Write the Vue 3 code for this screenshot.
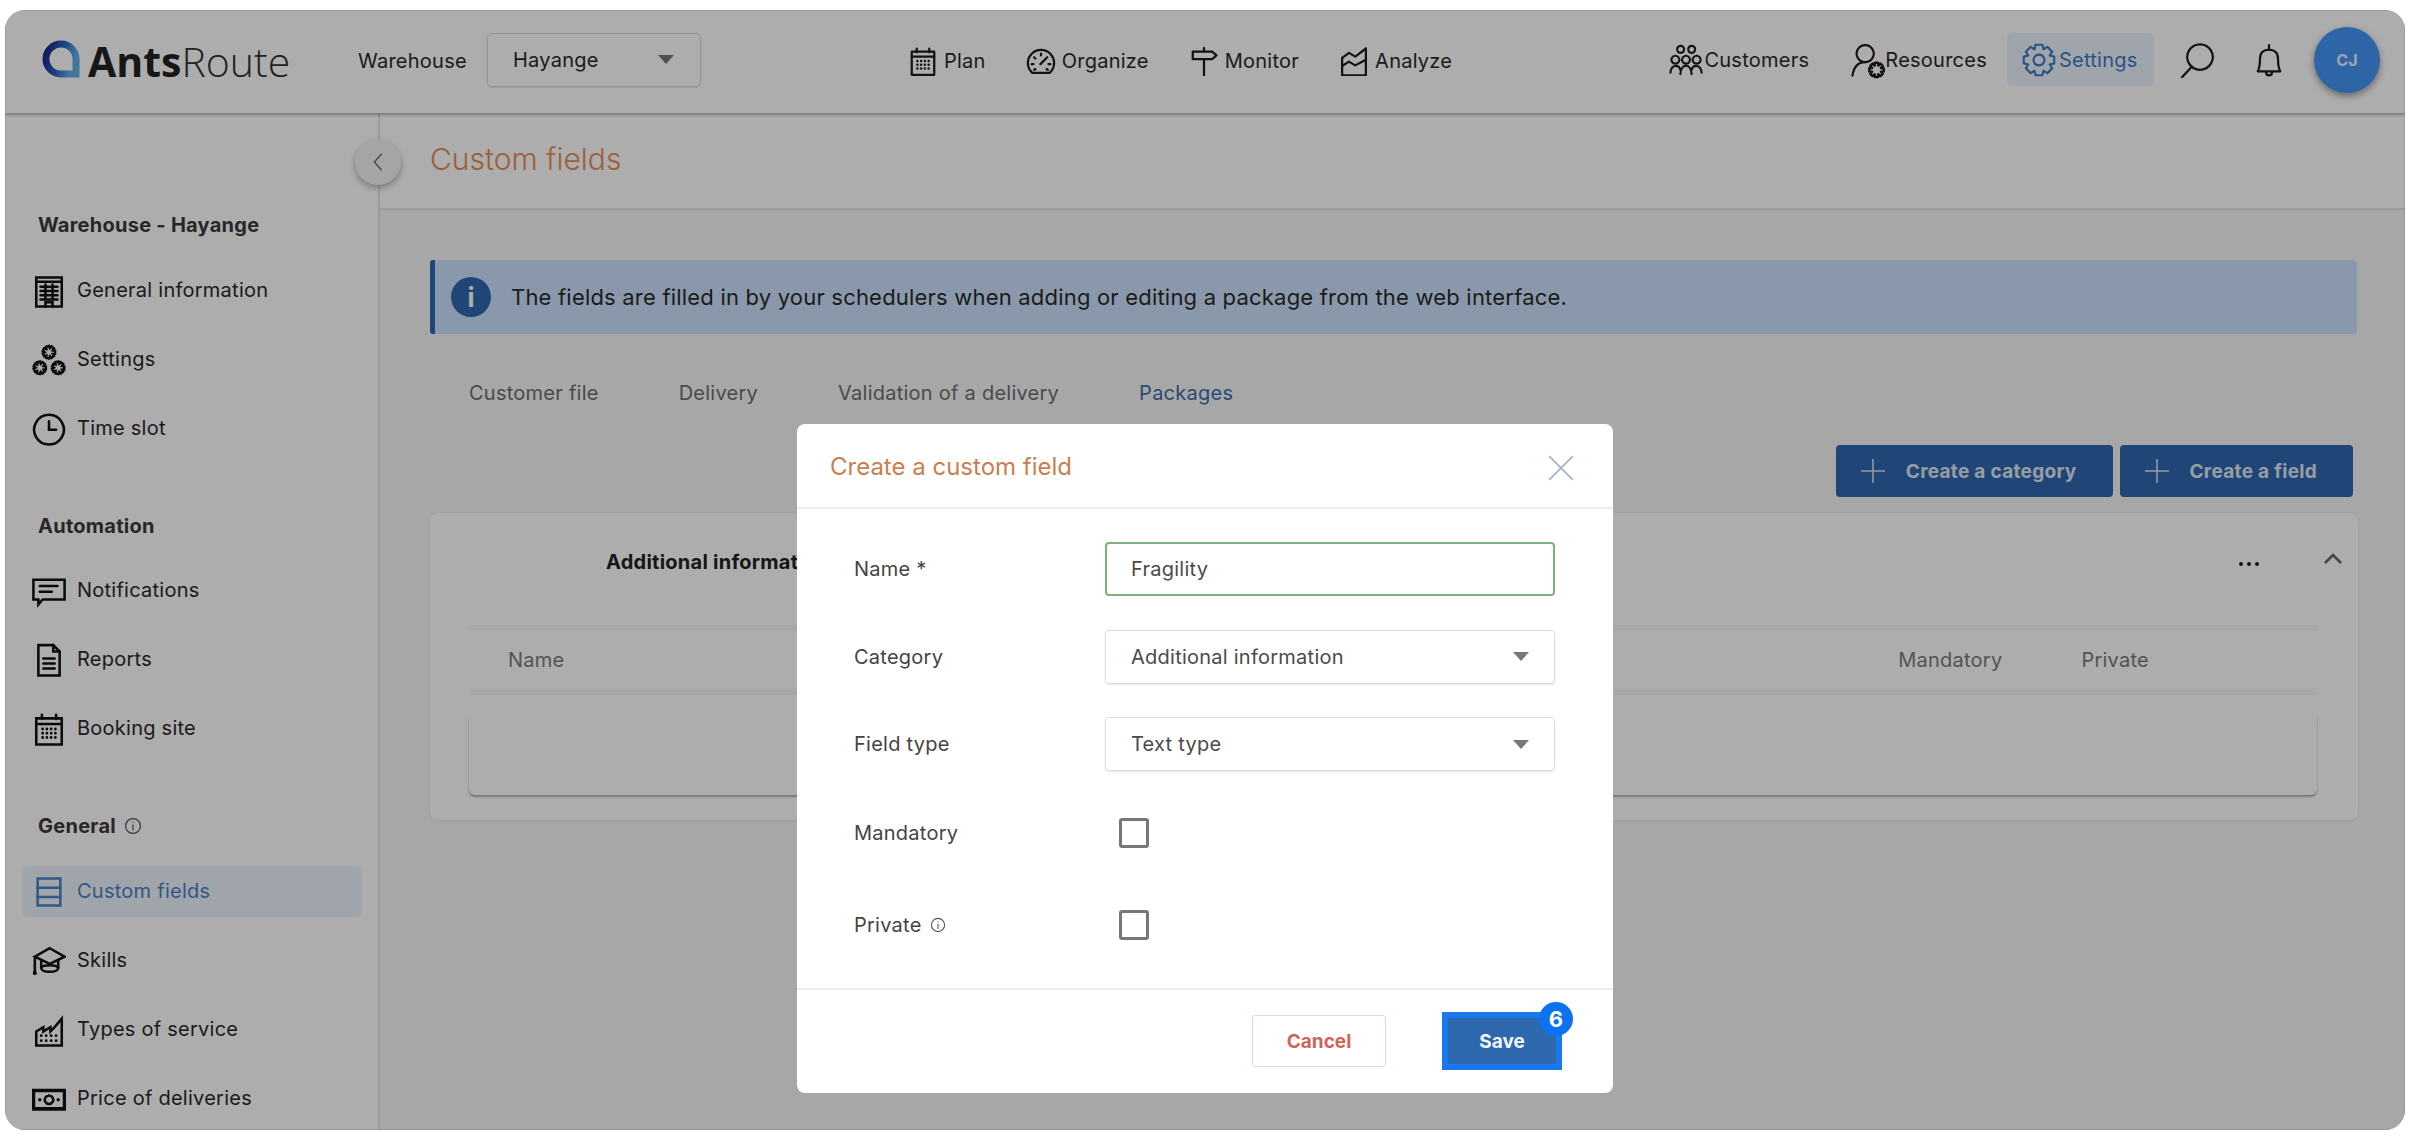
<script setup>
function gear(cx, cy, r1, r2, n) {
  const pts = []
  const step = (Math.PI * 2) / n
  for (let i = 0; i < n; i++) {
    const a = i * step
    const seq = [[r1, -0.5], [r2, -0.28], [r2, 0.28], [r1, 0.5]]
    for (const [r, f] of seq) {
      const t = a + f * step
      pts.push((cx + r * Math.cos(t)).toFixed(2) + ' ' + (cy + r * Math.sin(t)).toFixed(2))
    }
  }
  return 'M' + pts.join('L') + 'Z'
}
const dots = (xs, ys) => xs.flatMap(x => ys.map(y => `M${x} ${y}h.01`)).join('')
const icons = {
  calendar: ['M3 4.5H21V23H3Z', 'M3 8.5H21', 'M7 2V5M17 2V5', { d: dots([7.5, 10.5, 13.5, 16.5], [12, 15, 18]), w: 2 }],
  gauge: ['M5 21.5A10.5 10.5 0 1 1 19 21.5Z', 'M11.5 14.5L17 9', 'M12 6V7.5M6.5 9L7.5 10M4.5 14.5H6M19.5 14.5H18M6.5 19L7.5 18.5M17.5 19L16.5 18.5'],
  sign: ['M3 4.5H18.5L22 7.5L18.5 10.5H3Z', 'M12 1.5V4.5M12 10.5V23.5'],
  chart: ['M2.5 9.5V23.5H21.5V2', 'M2.5 9.5L8 5.5L13 8.5L21.5 2', 'M2.5 16L8 12.5L13 15.5L21.5 11'],
  people: ['M8.2 2a2.5 2.5 0 1 0 .01 0M16 2a2.5 2.5 0 1 0 .01 0', 'M4.5 9a2.8 2.8 0 1 0 .01 0M12 9a2.8 2.8 0 1 0 .01 0M19.5 9a2.8 2.8 0 1 0 .01 0', 'M1 21C1.5 15 7 15 8 19M8 22C8.5 14 15.5 14 16 22M16 19C17 15 22.5 15 23 21'],
  resource: ['M10 1.5a6 6 0 1 0 .01 0', 'M1 23C2 17 5 13.5 10 13.5', { d: gear(18, 19, 3.4, 5.2, 8), w: 1.8 }],
  gearBig: [{ d: gear(12, 12, 8.2, 11, 8), w: 1.5 }, 'M12 8.2a3.8 3.8 0 1 0 .01 0'],
  search: ['M14 1.5a8.5 8.5 0 1 0 .01 0', 'M8.5 16.5L2 23.5'],
  bell: ['M4.5 19.5C6 17 6 14 6 11C6 7 8.5 5 12 5C15.5 5 18 7 18 11C18 14 18 17 19.5 19.5Z', 'M12 2V5M10 20C10 23 14 23 14 20'],
  building: ['M3 2.5H21V23H3Z', 'M3 5.5H21', 'M6 9H18M6 12H18M6 15H18M6 18H18M9.5 7.5V18M14.5 7.5V18', 'M9.5 23V20H14.5V23'],
  gears: [{ d: gear(12, 6.5, 3, 4.4, 7), w: 1.8 }, { d: gear(5.5, 17.5, 3, 4.4, 7), w: 1.8 }, { d: gear(18.5, 17.5, 3, 4.4, 7), w: 1.8 }],
  clock: ['M12 2a10.5 10.5 0 1 0 .01 0', 'M12 6.5V12.5H17'],
  chat: ['M1 4H23V18H7.5L4.5 21.5V18H1Z', 'M5.5 8.5H18M5.5 12.5H14'],
  doc: ['M4.5 1.5H15L19.5 6V23H4.5Z', 'M15 1.5V6H19.5', 'M8 11H16M8 14.5H16M8 18H16'],
  table: ['M4 2.5H20V21.5H4Z', 'M4 9H20M4 15.5H20'],
  hat: ['M12.5 3L23 9L12.5 14L2 9Z', 'M6.5 12V17C7 20.5 18 20.5 18.5 17V12', 'M6.5 16.5C8 14.5 17 14.5 18.5 16.5', 'M2 10.5C2 13 2 17 2 20', { d: 'M2 20.5h.01', w: 3 }],
  factory: ['M3 23V13L8 10V13L13 10V13L16 10L21 4V23Z', { d: dots([6.5, 10, 13.5, 17], [16, 19.5]), w: 2 }],
  money: [{ d: 'M1 6H23V19H1Z', w: 2.6 }, 'M12 9.5a3 3 0 1 0 .01 0', { d: 'M5.5 12.5h.01M18.5 12.5h.01', w: 2.4 }]
}
const norm = n => icons[n].map(p => (typeof p === 'string' ? { d: p, w: null } : p))

const nav = [
  { icon: 'calendar', label: 'Plan' },
  { icon: 'gauge', label: 'Organize' },
  { icon: 'sign', label: 'Monitor' },
  { icon: 'chart', label: 'Analyze' }
]
const sections = [
  { title: 'Warehouse - Hayange', items: [
    { icon: 'building', label: 'General information' },
    { icon: 'gears', label: 'Settings' },
    { icon: 'clock', label: 'Time slot' }
  ] },
  { title: 'Automation', items: [
    { icon: 'chat', label: 'Notifications' },
    { icon: 'doc', label: 'Reports' },
    { icon: 'calendar', label: 'Booking site' }
  ] },
  { title: 'General', info: true, items: [
    { icon: 'table', label: 'Custom fields', active: true },
    { icon: 'hat', label: 'Skills' },
    { icon: 'factory', label: 'Types of service' },
    { icon: 'money', label: 'Price of deliveries' }
  ] }
]
const tabs = [
  { label: 'Customer file' },
  { label: 'Delivery' },
  { label: 'Validation of a delivery' },
  { label: 'Packages', active: true }
]
</script>

<template>
  <div class="window">
    <header class="topbar">
      <div class="logo">
        <svg class="logo-mark" viewBox="0 0 38 38" fill="none">
          <defs>
            <linearGradient id="lg" x1="0" x2="1" y1="0" y2="0.3">
              <stop offset="0" stop-color="#1b1f86" />
              <stop offset="0.55" stop-color="#2a5fbe" />
              <stop offset="1" stop-color="#5fb0ea" />
            </linearGradient>
          </defs>
          <path d="M19 4A15 15 0 0 0 19 34H34V19A15 15 0 0 0 19 4Z" stroke="url(#lg)" stroke-width="7" />
        </svg>
        <span class="logo-text"><b>Ants</b>Route</span>
      </div>
      <span class="wh-label">Warehouse</span>
      <div class="wh-select">
        <span>Hayange</span>
        <i class="caret"></i>
      </div>
      <nav class="nav">
        <a v-for="n in nav" :key="n.label" class="nav-item">
          <svg class="ic" viewBox="0 0 24 24"><path v-for="(p, i) in norm(n.icon)" :key="i" :d="p.d" :stroke-width="p.w || 1.8" /></svg>
          <span>{{ n.label }}</span>
        </a>
      </nav>
      <div class="right">
        <a class="nav-item customers">
          <svg class="ic wide" viewBox="0 0 24 24"><path v-for="(p, i) in norm('people')" :key="i" :d="p.d" :stroke-width="1.5" /></svg>
          <span>Customers</span>
        </a>
        <a class="nav-item resources">
          <svg class="ic wide" viewBox="0 0 24 24"><path v-for="(p, i) in norm('resource')" :key="i" :d="p.d" :stroke-width="p.w || 1.5" /></svg>
          <span>Resources</span>
        </a>
        <a class="nav-item settings">
          <svg class="ic wide" viewBox="0 0 24 24"><path v-for="(p, i) in norm('gearBig')" :key="i" :d="p.d" :stroke-width="1.5" /></svg>
          <span>Settings</span>
        </a>
        <svg class="ic tool search" viewBox="0 0 24 24"><path v-for="(p, i) in norm('search')" :key="i" :d="p.d" stroke-width="1.5" /></svg>
        <svg class="ic tool bell" viewBox="0 0 24 24"><path v-for="(p, i) in norm('bell')" :key="i" :d="p.d" stroke-width="1.5" /></svg>
        <div class="avatar">CJ</div>
      </div>
    </header>

    <div class="body">
      <aside class="sidebar">
        <section v-for="s in sections" :key="s.title" class="side-section">
          <h3 class="side-title">
            {{ s.title }}
            <svg v-if="s.info" class="mini-info" viewBox="0 0 16 16"><circle cx="8" cy="8" r="6.6" /><path d="M8 7V11.5M8 4.6v.01" /></svg>
          </h3>
          <a v-for="it in s.items" :key="it.label" class="side-item" :class="{ active: it.active }">
            <svg class="side-ic" viewBox="0 0 24 24"><path v-for="(p, i) in norm(it.icon)" :key="i" :d="p.d" :stroke-width="p.w || 1.8" /></svg>
            <span>{{ it.label }}</span>
          </a>
        </section>
      </aside>

      <main class="main">
        <div class="page-head">
          <h1>Custom fields</h1>
          <button class="collapse">
            <svg viewBox="0 0 12 24"><path d="M10 3L2 12L10 21" /></svg>
          </button>
        </div>
        <div class="page-body">
          <div class="banner">
            <span class="banner-ic">i</span>
            <span>The fields are filled in by your schedulers when adding or editing a package from the web interface.</span>
          </div>
          <div class="tabs">
            <a v-for="t in tabs" :key="t.label" class="tab" :class="{ active: t.active }">{{ t.label }}</a>
          </div>
          <div class="actions">
            <button class="act"><svg viewBox="0 0 26 26"><path d="M13 1V25M1 13H25" /></svg>Create a category</button>
            <button class="act"><svg viewBox="0 0 26 26"><path d="M13 1V25M1 13H25" /></svg>Create a field</button>
          </div>
          <div class="card">
            <div class="card-head">
              <strong>Additional information</strong>
              <span class="more"><i></i><i></i><i></i></span>
              <svg class="chev" viewBox="0 0 20 12"><path d="M2 10L10 2L18 10" /></svg>
            </div>
            <div class="thead">
              <span class="th-name">Name</span>
              <span class="th-man">Mandatory</span>
              <span class="th-pri">Private</span>
            </div>
            <div class="trow"></div>
          </div>
        </div>
      </main>
    </div>

    <div class="overlay">
      <div class="modal">
        <div class="m-head">
          <h2>Create a custom field</h2>
          <svg class="m-close" viewBox="0 0 24 24"><path d="M1 1L23 23M23 1L1 23" /></svg>
        </div>
        <div class="m-body">
          <div class="row">
            <label>Name *</label>
            <div class="field ok">Fragility</div>
          </div>
          <div class="row">
            <label>Category</label>
            <div class="field">Additional information<i class="caret"></i></div>
          </div>
          <div class="row">
            <label>Field type</label>
            <div class="field">Text type<i class="caret"></i></div>
          </div>
          <div class="row check">
            <label>Mandatory</label>
            <span class="box"></span>
          </div>
          <div class="row check">
            <label>Private <svg class="mini-info dark" viewBox="0 0 16 16"><circle cx="8" cy="8" r="6.6" /><path d="M8 7V11.5M8 4.6v.01" /></svg></label>
            <span class="box"></span>
          </div>
        </div>
        <div class="m-foot">
          <button class="cancel">Cancel</button>
          <button class="save">Save<span class="badge">6</span></button>
        </div>
      </div>
    </div>
  </div>
</template>

<style>
html, body { margin: 0; background: #fff; overflow: hidden; }
</style>

<style scoped>
* { box-sizing: border-box; }
.window {
  position: relative;
  width: 2400px;
  height: 1120px;
  margin: 10px 5px;
  border-radius: 20px;
  overflow: hidden;
  background: #fff;
  font-family: Inter, "Liberation Sans", sans-serif;
  color: #2a2a2a;
  font-size: 20px;
  letter-spacing: .25px;
  display: flex;
  flex-direction: column;
  box-shadow: inset 0 0 0 1px #bbb;
}
.topbar {
  position: relative;
  z-index: 2;
  flex: none;
  height: 103px;
  display: flex;
  align-items: center;
  background: #fff;
  box-shadow: 0 2px 3px rgba(0,0,0,.3);
}
.logo { display: flex; align-items: center; margin-left: 37px; width: 316px; }
.logo-mark { width: 38px; height: 38px; margin-top: -6px; }
.logo-text { margin-left: 8px; font-family: "Open Sans", sans-serif; font-size: 41px; letter-spacing: 0; color: #333; font-weight: 300; line-height: 1; }
.logo-text b { font-weight: 700; color: #222; }
.wh-label { width: 129px; margin-top: -2px; }
.wh-select {
  width: 214px;
  height: 54px;
  margin-top: -4px;
  display: flex;
  align-items: center;
  justify-content: space-between;
  padding: 0 26px 0 25px;
  border: 1px solid #d8d8d8;
  border-radius: 5px;
  box-shadow: 0 1px 1px rgba(0,0,0,.1);
}
.caret {
  display: inline-block;
  width: 0;
  height: 0;
  border-left: 8px solid transparent;
  border-right: 8px solid transparent;
  border-top: 9px solid #777;
}
.nav { display: flex; margin-left: 207px; gap: 40px; margin-top: -2px; }
.nav-item { display: flex; align-items: center; gap: 6px; color: #2a2a2a; }
.ic { width: 30px; height: 30px; flex: none; fill: none; stroke: #1c1c1c; stroke-linecap: round; stroke-linejoin: round; }
.right { display: flex; align-items: center; margin-left: auto; margin-right: 25px; margin-top: -4px; }
.customers { margin-right: 42px; gap: 1px; }
.customers .wide { width: 34px; height: 34px; }
.resources { margin-right: 20px; gap: 0; }
.resources .wide { width: 34px; height: 38px; }
.settings {
  width: 147px;
  height: 53px;
  padding-left: 15px;
  gap: 3px;
  background: #ecf3fc;
  border-radius: 5px;
  color: #3c7bc4;
}
.settings .wide { width: 34px; height: 36px; stroke: #3c7bc4; }
.tool { width: 36px; height: 36px; }
.search { margin-left: 25px; }
.bell { margin-left: 36px; }
.avatar {
  margin-left: 27px;
  width: 66px;
  height: 66px;
  border-radius: 50%;
  background: #4596f7;
  color: #e8f1fd;
  font-size: 16px;
  font-weight: 700;
  display: flex;
  align-items: center;
  justify-content: center;
  box-shadow: 0 3px 7px rgba(0,0,0,.4);
}

.body { flex: 1; display: flex; min-height: 0; }
.sidebar {
  flex: none;
  width: 375px;
  padding-top: 97px;
  border-right: 2px solid #e2e2e2;
  background: #fff;
  overflow: hidden;
}
.side-section + .side-section { margin-top: 56.5px; }
.side-title {
  margin: 0 0 25px 33px;
  height: 30px;
  line-height: 30px;
  font-size: 20px;
  font-weight: 700;
  color: #3a3a3a;
  display: flex;
  align-items: center;
  gap: 8px;
}
.mini-info { width: 18px; height: 18px; fill: none; stroke: #555; stroke-width: 1.1; stroke-linecap: round; }
.side-item {
  display: flex;
  align-items: center;
  gap: 11px;
  width: 340px;
  height: 51px;
  margin: 0 0 18px 17px;
  padding-left: 10px;
  border-radius: 6px;
  color: #2a2a2a;
}
.side-item:last-child { margin-bottom: 0; }
.side-item span { margin-top: -2px; }
.side-ic { width: 34px; height: 34px; flex: none; fill: none; stroke: #111; stroke-linecap: round; stroke-linejoin: miter; }
.side-item.active { background: #ecf3fc; color: #4a82c6; }
.side-item.active .side-ic { stroke: #4a82c6; }

.main { flex: 1; min-width: 0; display: flex; flex-direction: column; background: #f7f7f7; }
.page-head {
  position: relative;
  flex: none;
  height: 97px;
  display: flex;
  align-items: center;
  padding-left: 50px;
  background: #fff;
  border-bottom: 2px solid #e6e6e6;
}
.page-head h1 { margin: 0 0 3px; font-size: 30px; font-weight: 300; letter-spacing: 0; color: #e68e55; }
.collapse {
  position: absolute;
  left: -25px;
  top: 26px;
  width: 46px;
  height: 46px;
  padding: 0;
  border: none;
  border-radius: 50%;
  background: #f4f4f4;
  box-shadow: 0 3px 6px rgba(0,0,0,.3);
  display: flex;
  align-items: center;
  justify-content: center;
}
.collapse svg { width: 12px; height: 22px; fill: none; stroke: #666; stroke-width: 1.5; }
.page-body { flex: 1; padding: 50px 48px 0 50px; }
.banner {
  height: 74px;
  display: flex;
  align-items: center;
  padding-left: 16px;
  gap: 20px;
  background: #cbe2fd;
  border-left: 5px solid #2e68ae;
  border-radius: 3px;
  font-size: 22px;
  letter-spacing: .2px;
}
.banner-ic {
  width: 40px;
  height: 40px;
  border-radius: 50%;
  background: #2e68ae;
  color: #fff;
  display: flex;
  align-items: center;
  justify-content: center;
  font-weight: 700;
  font-size: 26px;
}
.tabs { display: flex; gap: 80px; height: 40px; margin-top: 39px; padding-left: 39px; align-items: center; color: #6e6e6e; }
.tab.active { color: #3c6ea8; }
.actions { display: flex; justify-content: flex-end; gap: 7px; margin: 32px 4px 0 0; }
.act {
  height: 52px;
  display: flex;
  align-items: center;
  padding: 0 36px 0 24px;
  gap: 20px;
  border: none;
  border-radius: 4px;
  background: #2e68ae;
  color: #dfe8f3;
  font: 700 19px Inter, sans-serif;
  letter-spacing: .3px;
}
.act svg { width: 26px; height: 26px; fill: none; stroke: #dfe8f3; stroke-width: 1.5; }
.card {
  height: 307px;
  margin: 16px -1px 0 0;
  padding: 0 41px 0 39px;
  background: #fff;
  border-radius: 8px;
  box-shadow: 0 -1px 3px rgba(0,0,0,.05), 0 2px 3px rgba(0,0,0,.05);
}
.card-head { position: relative; height: 112px; padding: 37px 0 0 137px; }
.card-head strong { font-size: 20px; font-weight: 700; color: #222; }
.more { position: absolute; right: 58px; top: 49px; display: flex; gap: 4px; }
.more i { width: 4px; height: 4px; border-radius: 50%; background: #222; }
.chev { position: absolute; right: -26px; top: 40px; width: 20px; height: 12px; fill: none; stroke: #666; stroke-width: 2.5; }
.thead {
  position: relative;
  height: 70px;
  display: flex;
  align-items: center;
  color: #7b7b7b;
  background: linear-gradient(#f3f3f3, #fff 8px, #fff 62px, #f2f2f2);
}
.th-name { margin-left: 39px; }
.th-man { margin-left: auto; }
.th-pri { margin: 0 168px 0 79px; }
.trow {
  height: 82px;
  margin-top: 18px;
  background: #fff;
  border-radius: 6px;
  box-shadow: 0 2px 2px rgba(0,0,0,.3);
}

.overlay {
  position: absolute;
  inset: 0;
  z-index: 5;
  background: rgba(0,0,0,.32);
  box-shadow: inset 0 0 0 1px rgba(0,0,0,.1);
}
.modal {
  position: absolute;
  left: 792px;
  top: 414px;
  width: 816px;
  height: 669px;
  background: #fff;
  border-radius: 8px;
  display: flex;
  flex-direction: column;
  color: #444;
}
.m-head {
  flex: none;
  height: 85px;
  display: flex;
  align-items: center;
  justify-content: space-between;
  padding: 0 39px 0 33px;
  border-bottom: 2px solid #ececec;
}
.m-head h2 { margin: 2px 0 0; font-size: 24px; font-weight: 400; letter-spacing: 0; color: #c97f4e; }
.m-close { width: 26px; height: 26px; margin-top: 4px; fill: none; stroke: #a6b2d4; stroke-width: 1.6; }
.m-body { flex: 1; min-height: 0; padding: 33px 58px 0 57px; }
.row { display: flex; align-items: center; height: 54px; margin-bottom: 33.5px; }
.row label { width: 251px; display: flex; align-items: center; gap: 8px; }
.mini-info.dark { width: 16px; height: 16px; }
.field {
  flex: 1;
  height: 100%;
  display: flex;
  align-items: center;
  justify-content: space-between;
  padding: 0 25px;
  border: 1px solid #dcdcdc;
  border-radius: 4px;
  box-shadow: 0 1px 2px rgba(0,0,0,.1);
  color: #4a4a4a;
}
.field.ok { border: 2px solid #7cb27c; box-shadow: none; padding: 0 24px; }
.row.check { height: 30px; margin-bottom: 62px; }
.row.check:nth-child(4) { margin-top: 47px; }
.row.check:last-child { margin-bottom: 0; }
.box {
  width: 30px;
  height: 30px;
  margin-left: 14px;
  border: 3px solid #777;
  border-radius: 3px;
}
.m-foot {
  flex: none;
  height: 105px;
  position: relative;
  border-top: 2px solid #ececec;
  display: flex;
  justify-content: flex-end;
  padding: 25px 51px 0 0;
  gap: 56px;
}
.m-foot button { font: 700 19px Inter, sans-serif; letter-spacing: 0; }
.cancel {
  width: 134px;
  height: 52px;
  background: #fff;
  border: 1px solid #e7d6d4;
  border-radius: 3px;
  color: #cf6559;
}
.save {
  position: relative;
  width: 120px;
  height: 58px;
  margin-top: -3px;
  border: 6px solid #1a78ee;
  background: #2e68ae;
  color: #f3f7fb;
}
.badge {
  position: absolute;
  right: -17px;
  top: -16px;
  width: 34px;
  height: 34px;
  border-radius: 50%;
  background: #0c72f0;
  color: #fff;
  font-size: 22px;
  display: flex;
  align-items: center;
  justify-content: center;
}
</style>
